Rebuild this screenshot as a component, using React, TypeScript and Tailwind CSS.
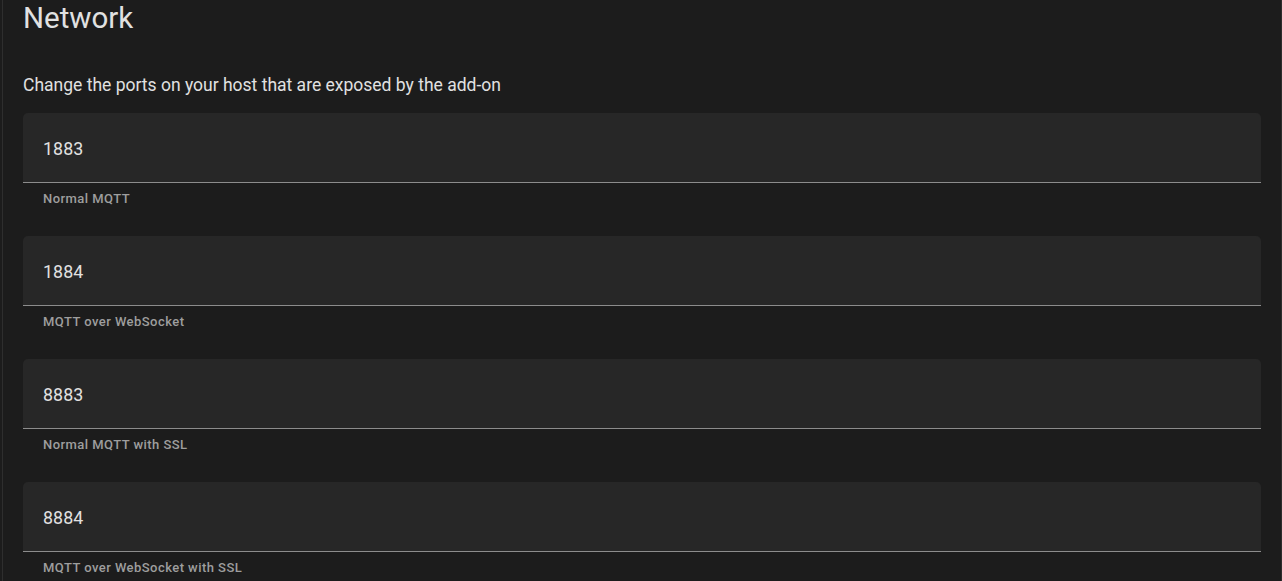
const ports = [
  { value: '1883', label: 'Normal MQTT' },
  { value: '1884', label: 'MQTT over WebSocket' },
  { value: '8883', label: 'Normal MQTT with SSL' },
  { value: '8884', label: 'MQTT over WebSocket with SSL' },
];

const App = () => {
  return (
    <div className="h-[581px] w-full overflow-hidden bg-[#1c1c1c] pl-[2px] font-['Roboto',sans-serif]">
      <div className="h-full border-x border-[#2e2e2e] px-5">
        <h1 className="text-[29.5px] leading-[36px] text-[#e1e1e1]">Network</h1>
        <p className="mt-[37px] text-[17.5px] leading-[24px] text-[#e1e1e1]">
          Change the ports on your host that are exposed by the add-on
        </p>
        <div className="mt-4 flex flex-col">
          {ports.map((port) => (
            <div key={port.value} className="mb-[29px]">
              <div className="flex h-[70px] items-center rounded-t-[5px] border-b border-[#8c8c8c] bg-[#272727] px-5 pt-1">
                <span className="text-[17.8px] tracking-[0.1px] text-[#e1e1e1]">{port.value}</span>
              </div>
              <div className="px-5 pt-2 text-[13px] font-medium leading-4 tracking-[0.45px] text-[#9e9e9e]">
                {port.label}
              </div>
            </div>
          ))}
        </div>
      </div>
    </div>
  );
};

export default App;
